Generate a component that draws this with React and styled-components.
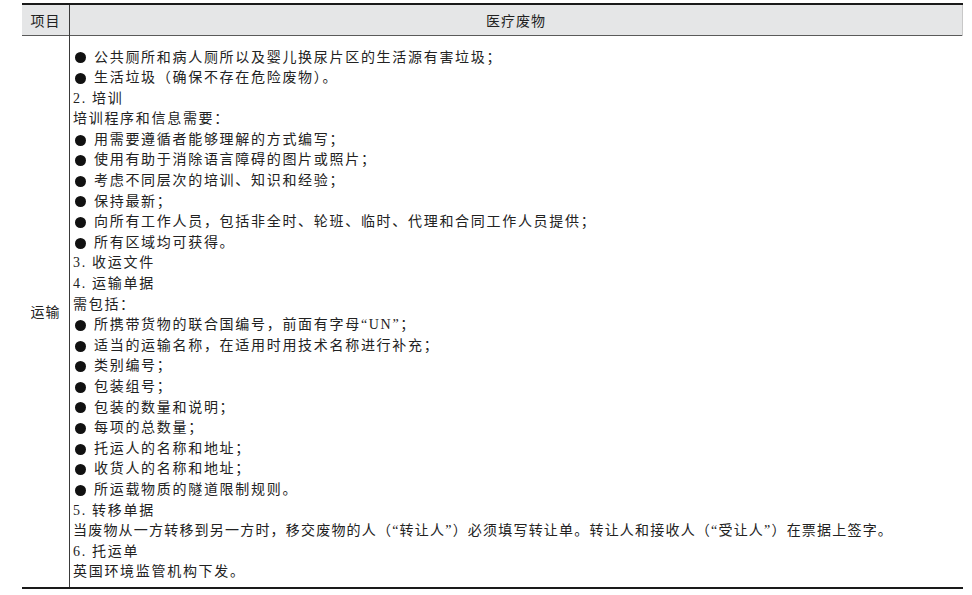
import React from 'react';
import styled, { createGlobalStyle } from 'styled-components';

const GlobalStyle = createGlobalStyle`
  html, body {
    margin: 0;
    padding: 0;
    background: #ffffff;
  }
  body {
    font-family: "Liberation Serif", "Noto Sans CJK SC", serif;
    color: #222222;
  }
`

const Page = styled.div`
  width: 972px;
  height: 595px;
  padding: 3px 9px 0 22px;
  box-sizing: border-box;
`

const Table = styled.table`
  width: 941px;
  border-collapse: collapse;
  font-family: "Liberation Serif", "Noto Sans CJK SC", serif;
  font-size: 14px;
  color: #222222;

  th, td {
    padding: 0;
  }
`

const HeadRow = styled.tr`
  background: #e5e6e7;
  height: 31px;
  border-top: 2px solid #1a1a1a;
  border-bottom: 1px solid #5a5a5a;
`

const HeadCell = styled.th`
  font-weight: normal;
  text-align: center;
  vertical-align: middle;
  letter-spacing: 1px;
  border-right: ${p => (p.$divider ? '1px solid #3a3a3a' : '1px solid #c8c8c8')};
  width: ${p => (p.$narrow ? '47px' : 'auto')};
`

const BodyRow = styled.tr`
  border-bottom: 2px solid #1a1a1a;
`

const LabelCell = styled.td`
  text-align: center;
  vertical-align: middle;
  letter-spacing: 1px;
  border-right: 1px solid #3a3a3a;
`

const ContentCell = styled.td`
  vertical-align: top;
  padding: 12px 0 4px 3px !important;
`

const Line = styled.div`
  height: 20.6px;
  line-height: 20.6px;
  white-space: nowrap;
  letter-spacing: ${p => (p.$dense ? '1.2px' : '1.7px')};
  display: flex;
  align-items: center;
`

const Dot = styled.span`
  display: inline-block;
  width: 11px;
  height: 11px;
  border-radius: 50%;
  background: #111111;
  margin: 0 8px 0 2px;
  flex: none;
`

const lines = [
  { bullet: true, text: '公共厕所和病人厕所以及婴儿换尿片区的生活源有害垃圾；' },
  { bullet: true, text: '生活垃圾（确保不存在危险废物）。' },
  { text: '2. 培训' },
  { text: '培训程序和信息需要：' },
  { bullet: true, text: '用需要遵循者能够理解的方式编写；' },
  { bullet: true, text: '使用有助于消除语言障碍的图片或照片；' },
  { bullet: true, text: '考虑不同层次的培训、知识和经验；' },
  { bullet: true, text: '保持最新；' },
  { bullet: true, text: '向所有工作人员，包括非全时、轮班、临时、代理和合同工作人员提供；' },
  { bullet: true, text: '所有区域均可获得。' },
  { text: '3. 收运文件' },
  { text: '4. 运输单据' },
  { text: '需包括：' },
  { bullet: true, text: '所携带货物的联合国编号，前面有字母“UN”；' },
  { bullet: true, text: '适当的运输名称，在适用时用技术名称进行补充；' },
  { bullet: true, text: '类别编号；' },
  { bullet: true, text: '包装组号；' },
  { bullet: true, text: '包装的数量和说明；' },
  { bullet: true, text: '每项的总数量；' },
  { bullet: true, text: '托运人的名称和地址；' },
  { bullet: true, text: '收货人的名称和地址；' },
  { bullet: true, text: '所运载物质的隧道限制规则。' },
  { text: '5. 转移单据' },
  { dense: true, text: '当废物从一方转移到另一方时，移交废物的人（“转让人”）必须填写转让单。转让人和接收人（“受让人”）在票据上签字。' },
  { text: '6. 托运单' },
  { text: '英国环境监管机构下发。' },
];

function App() {
    return (
        <Page>
            <GlobalStyle />
            <Table>
                <thead>
                    <HeadRow>
                        <HeadCell $narrow $divider>项目</HeadCell>
                        <HeadCell>医疗废物</HeadCell>
                    </HeadRow>
                </thead>
                <tbody>
                    <BodyRow>
                        <LabelCell>运输</LabelCell>
                        <ContentCell>
                            {lines.map((l, i) => (
                                <Line key={i} $dense={l.dense}>
                                    {l.bullet && <Dot />}
                                    {l.text}
                                </Line>
                            ))}
                        </ContentCell>
                    </BodyRow>
                </tbody>
            </Table>
        </Page>
    );
}

export default App;
